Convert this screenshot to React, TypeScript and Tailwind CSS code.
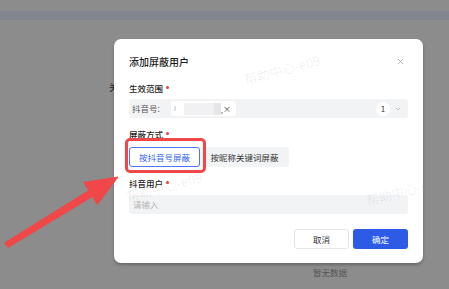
import React from "react";
import { X, ChevronDown } from "lucide-react";

const font = { fontFamily: '"Noto Sans CJK SC", "Noto Sans", sans-serif' };

function Label({ text }: { text: string }) {
  return (
    <div className="flex items-center gap-[3px] leading-[12px] text-[8.5px] font-medium text-[#1f1f1f]">
      <span>{text}</span>
      <span className="w-[2.5px] h-[2.5px] rounded-full bg-[#f04040] -mt-[1px]" />
    </div>
  );
}

function Watermark({ left, top }: { left: string; top: string }) {
  return (
    <div
      className={`absolute ${left} ${top} -rotate-[15deg] text-[13px] leading-[16px] text-[rgba(0,0,0,0.07)] whitespace-nowrap pointer-events-none`}
    >
      帮助中心-e09
    </div>
  );
}

export default function App() {
  return (
    <div
      className="relative w-[449px] h-[289px] overflow-hidden bg-[#8c8c8c]"
      style={font}
    >
      <div className="h-[11px]" />
      <div className="h-[9px] bg-[#82858e]" />
      <div className="pl-[109px] pt-[62px] text-[9px] leading-[12px] text-[#262626]">关</div>
      <div className="pl-[313px] pt-[172px] text-[8.5px] leading-[12px] text-[#555]">暂无数据</div>

      {/* modal */}
      <div className="absolute left-[114px] top-[39px] w-[309px] h-[224px] bg-white rounded-[7px] overflow-hidden shadow-[0_2px_3px_rgba(0,0,0,0.25)] px-[15px] pt-[15px] flex flex-col">
        <div className="flex items-center justify-between h-[14px]">
          <span className="text-[10px] font-medium text-[#1f1f1f]">添加屏蔽用户</span>
          <X size={9} strokeWidth={1.6} className="text-[#8a8a8a] mr-[3px]" />
        </div>

        <div className="mt-[14px]">
          <Label text="生效范围" />
        </div>
        <div className="mt-[5px] h-[19px] bg-[#f2f3f5] rounded-[3px] flex items-center pl-[3px] pr-[6px]">
          <span className="text-[8.5px] text-[#555] w-[39px]">抖音号:</span>
          <div className="w-[65px] h-[15px] bg-white rounded-[3px] flex items-center pl-[3px] pr-[5px]">
            <span className="w-[2px] h-[5px] bg-[#ddd] rounded-[1px]" />
            <span className="ml-[8px] w-[30px] h-[12px] bg-[#f1f1f3]" />
            <span className="w-[7px] h-[12px] bg-[#e6e6e8]" />
            <span className="text-[8px] text-[#666] leading-[10px] mt-[3px]">,</span>
            <span className="ml-auto text-[8px] text-[#444] leading-[10px]">×</span>
          </div>
          <div className="flex-1" />
          <div className="w-[14px] h-[14px] rounded-full bg-white flex items-center justify-center text-[8px] text-[#333]">1</div>
          <ChevronDown size={8} strokeWidth={1.6} className="text-[#999] ml-[4px]" />
        </div>

        <div className="mt-[10px]">
          <Label text="屏蔽方式" />
        </div>
        <div className="mt-[7px] relative flex h-[20px] text-[8.5px]">
          <div className="w-[71px] h-[20px] border border-[#4a78f5] bg-white text-[#2f5ff0] rounded-[3px] flex items-center justify-center">
            按抖音号屏蔽
          </div>
          <div className="w-[89px] h-[20px] bg-[#f2f3f5] text-[#333] rounded-[3px] flex items-center justify-center">
            按昵称关键词屏蔽
          </div>
          <div className="absolute -left-[4px] -top-[9px] w-[81px] h-[35px] border-[3px] border-[#f04848] rounded-[5px]" />
        </div>

        <div className="mt-[10px]">
          <Label text="抖音用户" />
        </div>
        <div className="mt-[6px] h-[19px] bg-[#f2f3f5] rounded-[3px] flex items-center pl-[4px] text-[8.5px] text-[#b5b5b5]">
          请输入
        </div>

        <div className="mt-[15px] flex justify-end gap-[4px] text-[8.5px]">
          <div className="w-[55px] h-[20px] border border-[#e3e5e8] rounded-[3px] text-[#333] flex items-center justify-center">
            取消
          </div>
          <div className="w-[55px] h-[20px] bg-[#2d5be6] rounded-[3px] text-white flex items-center justify-center">
            确定
          </div>
        </div>

        <Watermark left="left-[129px]" top="top-[23px]" />
        <Watermark left="left-[11px]" top="top-[140px]" />
        <Watermark left="left-[251px]" top="top-[144px]" />
      </div>

      {/* arrow */}
      <svg
        className="absolute left-0 top-0 pointer-events-none"
        width="449"
        height="289"
        viewBox="0 0 449 289"
      >
        <polygon
          points="4.5,243 88.8,190.5 83.9,182.4 118,177 97.3,204.6 92.4,196.5 8,247.5"
          fill="#f04848"
          strokeLinejoin="round"
          stroke="#f04848"
          strokeWidth="1"
        />
      </svg>
    </div>
  );
}
